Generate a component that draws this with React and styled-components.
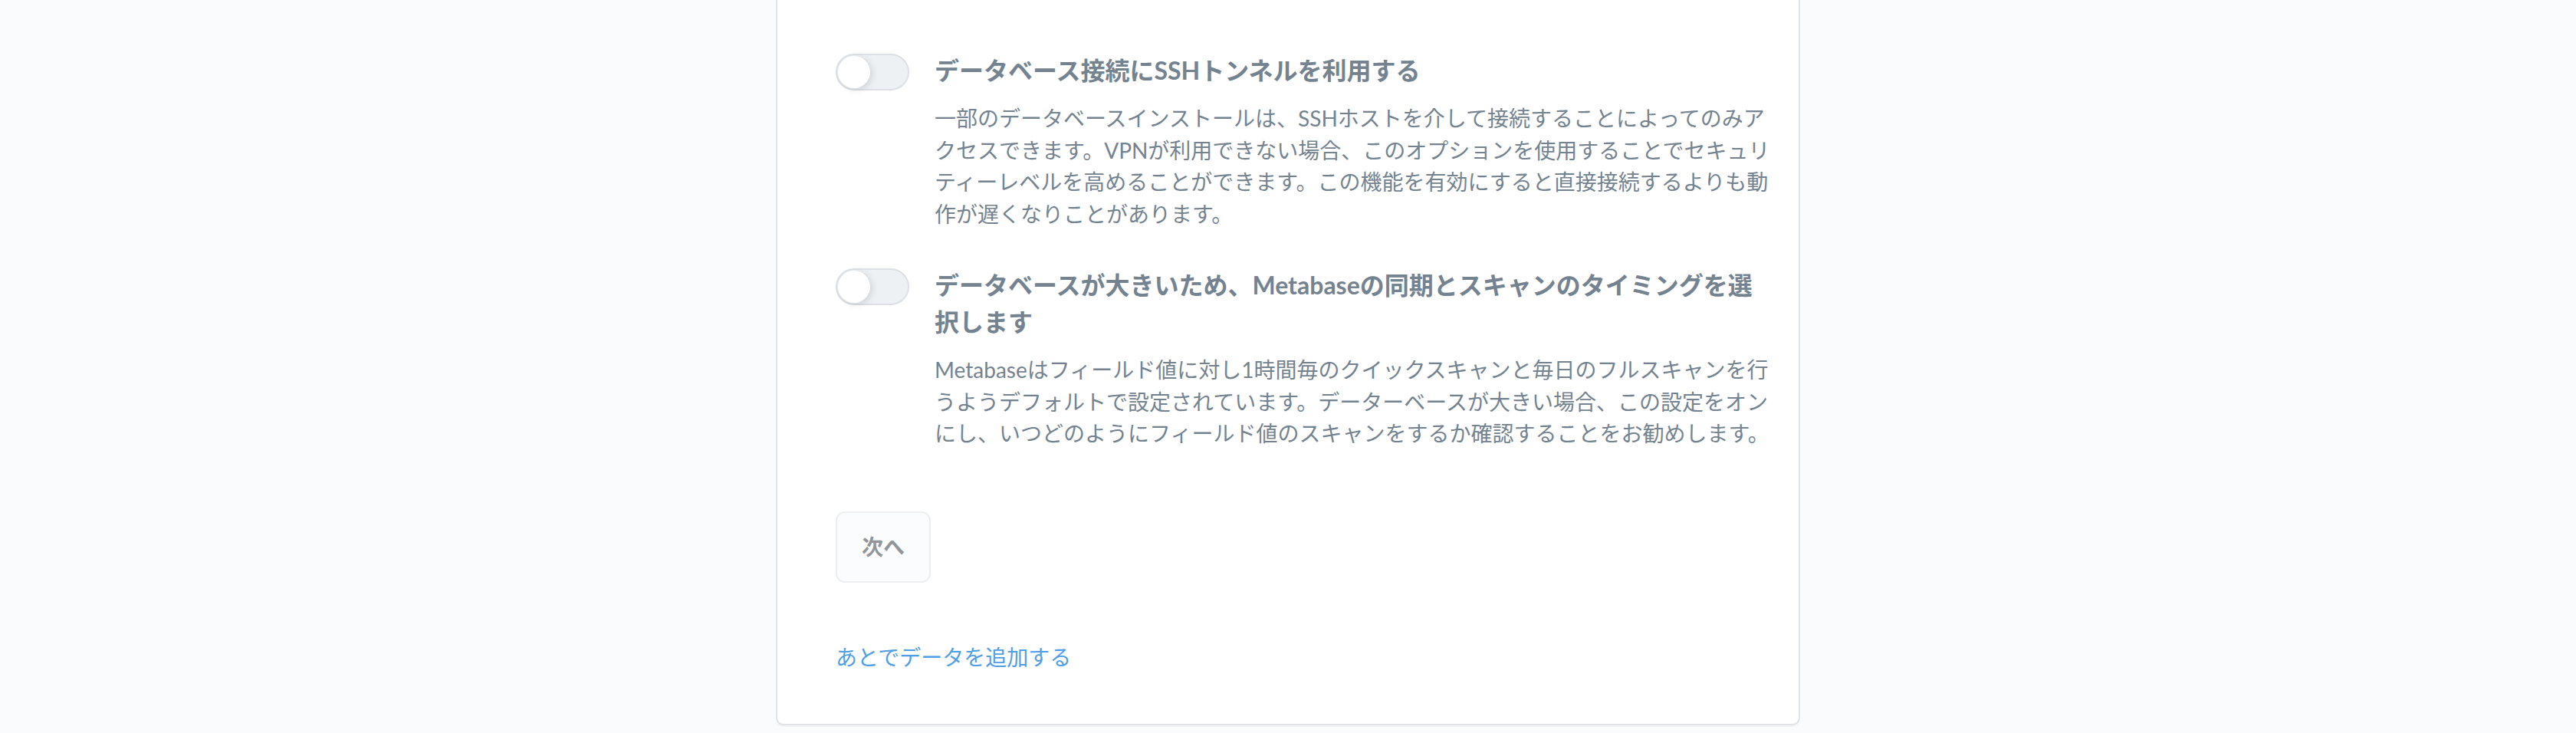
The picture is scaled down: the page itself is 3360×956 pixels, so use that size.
import React from "react";
import styled, { createGlobalStyle } from "styled-components";

const GlobalStyle = createGlobalStyle`
  html, body {
    margin: 0;
    padding: 0;
    background: #f9fbfc;
    font-family: Lato, "Noto Sans CJK JP", sans-serif;
    -webkit-font-smoothing: antialiased;
  }
  * { box-sizing: border-box; }
`;

const Page = styled.div`
  display: flex;
  justify-content: center;
  min-height: 956px;
  overflow: hidden;
`;

const Card = styled.div`
  width: 1336px;
  margin-top: -8px;
  margin-bottom: 11px;
  align-self: flex-start;
  background: #ffffff;
  border: 2px solid #dfe2e6;
  border-radius: 10px;
  box-shadow: 0 2px 0 rgba(0, 0, 0, 0.03);
  padding: 74px 32px 66px 76px;
  display: flex;
  flex-direction: column;
`;

const Field = styled.div`
  display: flex;
  align-items: flex-start;
  gap: 33px;
  margin-top: ${(p) => (p.$first ? "0" : "48px")};
`;

const Toggle = styled.div`
  position: relative;
  flex: none;
  width: 96px;
  height: 48px;
  margin-top: 2px;
  border-radius: 48px;
  border: 2px solid #dde1e5;
  background: #eef1f4;
  &::after {
    content: "";
    position: absolute;
    top: 1px;
    left: 1px;
    width: 42px;
    height: 42px;
    border-radius: 50%;
    background: #ffffff;
    box-shadow: 3px 2px 8px rgba(0, 0, 0, 0.12);
  }
`;

const TextCol = styled.div`
  flex: 1;
  min-width: 0;
  display: flex;
  flex-direction: column;
`;

const Title = styled.div`
  font-size: 32px;
  line-height: 48px;
  font-weight: 700;
  color: #74838f;
`;

const Desc = styled.p`
  margin: 18px 0 0;
  font-size: 28px;
  line-height: 41.5px;
  font-weight: 400;
  color: #74838f;
`;

const Footer = styled.div`
  margin-top: 80px;
  display: flex;
  flex-direction: column;
  align-items: flex-start;
  gap: 76px;
`;

const NextButton = styled.button`
  font-family: inherit;
  font-size: 28px;
  line-height: 41px;
  font-weight: 700;
  color: #929599;
  background: #fbfcfd;
  border: 2px solid #eceef1;
  border-radius: 12px;
  padding: 24px 32px;
  cursor: default;
`;

const LaterLink = styled.a`
  font-size: 28px;
  line-height: 42px;
  color: #509ee3;
  text-decoration: none;
`;

const fields = [
  {
    title: "データベース接続にSSHトンネルを利用する",
    desc:
      "一部のデータベースインストールは、SSHホストを介して接続することによってのみアクセスできます。VPNが利用できない場合、このオプションを使用することでセキュリティーレベルを高めることができます。この機能を有効にすると直接接続するよりも動作が遅くなりことがあります。",
  },
  {
    title: "データベースが大きいため、Metabaseの同期とスキャンのタイミングを選択します",
    desc:
      "Metabaseはフィールド値に対し1時間毎のクイックスキャンと毎日のフルスキャンを行うようデフォルトで設定されています。データーベースが大きい場合、この設定をオンにし、いつどのようにフィールド値のスキャンをするか確認することをお勧めします。",
  },
];

export default function App() {
  return (
    <>
      <GlobalStyle />
      <Page>
        <Card>
          {fields.map((f, i) => (
            <Field key={i} $first={i === 0}>
              <Toggle />
              <TextCol>
                <Title>{f.title}</Title>
                <Desc>{f.desc}</Desc>
              </TextCol>
            </Field>
          ))}
          <Footer>
            <NextButton>次へ</NextButton>
            <LaterLink href="#">あとでデータを追加する</LaterLink>
          </Footer>
        </Card>
      </Page>
    </>
  );
}
